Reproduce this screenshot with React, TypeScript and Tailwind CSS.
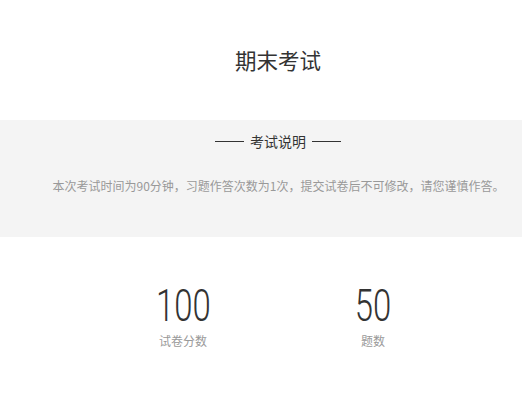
import React from 'react';

const cjk = { fontFamily: '"Noto Sans CJK SC", "Noto Sans", sans-serif' };

const Stat: React.FC<{ value: string; label: string }> = ({ value, label }) => (
  <div className="w-[190px] flex flex-col items-center">
    <div
      className="text-[45px] leading-[48px] text-[#333] font-light scale-x-[0.73]"
      style={{ fontFamily: 'Roboto, "Liberation Sans", sans-serif' }}
    >
      {value}
    </div>
    <div className="mt-[3px] text-[12px] leading-[16px] text-[#999]">{label}</div>
  </div>
);

export default function App() {
  return (
    <div className="w-[522px] h-[393px] bg-white pl-[34px]" style={cjk}>
      <div className="h-[120px] flex items-center justify-center">
        <h1 className="text-[21.5px] text-[#333] font-normal">期末考试</h1>
      </div>

      <div className="h-[117px] bg-[#f4f4f4] -ml-[34px] pl-[34px] pt-[12px]">
        <div className="flex items-center justify-center gap-[6px]">
          <span className="w-[29px] h-px bg-[#333]" />
          <span className="text-[14px] leading-[18px] text-[#333]">考试说明</span>
          <span className="w-[29px] h-px bg-[#333]" />
        </div>
        <p className="mt-[28px] pl-[1px] text-center text-[12px] leading-[16px] text-[#999]">
          本次考试时间为90分钟，习题作答次数为1次，提交试卷后不可修改，请您谨慎作答。
        </p>
      </div>

      <div className="flex justify-center pt-[45px]">
        <Stat value="100" label="试卷分数" />
        <Stat value="50" label="题数" />
      </div>
    </div>
  );
}
